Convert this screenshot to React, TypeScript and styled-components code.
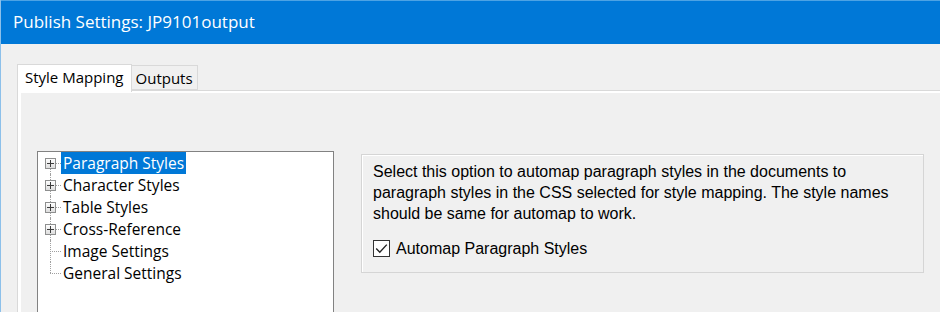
import React from 'react';
import styled, { createGlobalStyle } from 'styled-components';

const GlobalStyle = createGlobalStyle`
    html, body {
        margin: 0;
        padding: 0;
        background: #f0f0f0;
    }
`;

const treeItems = [
    { label: 'Paragraph Styles', expandable: true },
    { label: 'Character Styles', expandable: true },
    { label: 'Table Styles', expandable: true },
    { label: 'Cross-Reference', expandable: true },
    { label: 'Image Settings', expandable: false },
    { label: 'General Settings', expandable: false },
];

const ExpandBox = () => (
    <BoxSvg width="11" height="11" viewBox="0 0 11 11">
        <defs>
            <linearGradient id="boxFill" x1="0" y1="0" x2="0" y2="1">
                <stop offset="0" stopColor="#ffffff" />
                <stop offset="1" stopColor="#dcdcdc" />
            </linearGradient>
        </defs>
        <rect x="0.5" y="0.5" width="10" height="10" fill="url(#boxFill)" stroke="#8e8f8f" />
        <path d="M2 5.5 H9 M5.5 2 V9" stroke="#3c3c3c" strokeWidth="1" />
    </BoxSvg>
);

const CheckMark = () => (
    <svg width="17" height="17" viewBox="0 0 17 17">
        <rect x="0.5" y="0.5" width="16" height="16" fill="#ffffff" stroke="#333333" />
        <path d="M3.2 8.6 L6.8 12.2 L13.8 4.6" fill="none" stroke="#222222" strokeWidth="1.4" />
    </svg>
);

const App = () => {
    const selected = 0;
    return (
        <Window>
            <GlobalStyle />
            <TitleBar>Publish Settings: JP9101output</TitleBar>
            <Body>
                <TabStrip>
                    <Tab active>Style Mapping</Tab>
                    <Tab>Outputs</Tab>
                </TabStrip>
                <TabPanel>
                    <PanelContent>
                        <Tree>
                            {treeItems.map((item, index) => (
                                <TreeRow key={item.label}>
                                    <Gutter first={index === 0} last={index === treeItems.length - 1}>
                                        {item.expandable && <ExpandBox />}
                                    </Gutter>
                                    <TreeLabel selected={index === selected}>{item.label}</TreeLabel>
                                </TreeRow>
                            ))}
                        </Tree>
                        <GroupBox>
                            <Description>
                                Select this option to automap paragraph styles in the documents to
                                paragraph styles in the CSS selected for style mapping. The style names
                                should be same for automap to work.
                            </Description>
                            <CheckRow>
                                <CheckMark />
                                <CheckLabel>Automap Paragraph Styles</CheckLabel>
                            </CheckRow>
                        </GroupBox>
                    </PanelContent>
                </TabPanel>
            </Body>
        </Window>
    );
};

const Window = styled.div`
    width: 940px;
    height: 312px;
    overflow: hidden;
    box-sizing: border-box;
    border-left: 1px solid #8cc0ea;
    display: flex;
    flex-direction: column;
    background: #f0f0f0;
`;

const TitleBar = styled.div`
    height: 44px;
    flex-shrink: 0;
    box-sizing: border-box;
    border-top: 1px solid #4da3e4;
    background: #0078d7;
    color: #ffffff;
    font-family: 'Open Sans', sans-serif;
    font-size: 17px;
    line-height: 42px;
    padding-left: 12px;
`;

const Body = styled.div`
    flex: 1;
    display: flex;
    flex-direction: column;
    padding: 20px 0 0 16px;
    min-height: 0;
`;

const TabStrip = styled.div`
    display: flex;
    align-items: flex-end;
    height: 26px;
    position: relative;
    z-index: 1;
`;

const Tab = styled.div<{ active?: boolean }>`
    box-sizing: border-box;
    height: ${(p) => (p.active ? '28px' : '25px')};
    margin-bottom: ${(p) => (p.active ? '-2px' : '0')};
    padding: 0 ${(p) => (p.active ? '7px' : '4px')};
    border: 1px solid #d9d9d9;
    border-bottom: ${(p) => (p.active ? 'none' : '1px solid #d9d9d9')};
    border-left: ${(p) => (p.active ? '1px solid #d9d9d9' : 'none')};
    background: ${(p) => (p.active ? '#ffffff' : '#f0f0f0')};
    font-family: 'Open Sans', sans-serif;
    font-size: 15px;
    line-height: 24px;
    color: #000000;
`;

const TabPanel = styled.div`
    flex: 1;
    display: flex;
    border-top: 1px solid #d9d9d9;
    border-left: 1px solid #d9d9d9;
    background: #ffffff;
    padding: 2px 0 0 3px;
    min-height: 0;
`;

const PanelContent = styled.div`
    flex: 1;
    display: flex;
    align-items: flex-start;
    gap: 27px;
    background: #f0f0f0;
    padding: 58px 0 0 16px;
`;

const Tree = styled.div`
    width: 297px;
    height: 200px;
    flex-shrink: 0;
    box-sizing: border-box;
    border: 1px solid #828282;
    background: #ffffff;
    font-family: 'Open Sans', sans-serif;
    font-size: 15.5px;
    color: #000000;
`;

const TreeRow = styled.div`
    display: flex;
    align-items: center;
    height: 22px;
`;

const Gutter = styled.div<{ first?: boolean; last?: boolean }>`
    position: relative;
    width: 23px;
    height: 100%;
    flex-shrink: 0;

    &::before {
        content: '';
        position: absolute;
        left: 12px;
        top: ${(p) => (p.first ? '11px' : '0')};
        bottom: ${(p) => (p.last ? '11px' : '0')};
        border-left: 1px dotted #a0a0a0;
    }

    &::after {
        content: '';
        position: absolute;
        left: 12px;
        right: 0;
        top: 11px;
        border-top: 1px dotted #a0a0a0;
    }
`;

const BoxSvg = styled.svg`
    position: absolute;
    left: 7px;
    top: 6px;
    z-index: 1;
`;

const TreeLabel = styled.span<{ selected?: boolean }>`
    height: 22px;
    line-height: 22px;
    padding: 0 2px;
    background: ${(p) => (p.selected ? '#0078d7' : 'transparent')};
    color: ${(p) => (p.selected ? '#ffffff' : '#000000')};
    white-space: nowrap;
`;

const GroupBox = styled.div`
    width: 563px;
    height: 119px;
    margin-top: 3px;
    box-sizing: border-box;
    border: 1px solid #d5d5d5;
    box-shadow: inset 1px 1px 0 #ffffff;
    padding: 6px 12px 0 11px;
    font-family: 'Liberation Sans', Arial, sans-serif;
    font-size: 16px;
    color: #000000;
`;

const Description = styled.p`
    margin: 0;
    line-height: 21px;
`;

const CheckRow = styled.div`
    display: flex;
    align-items: center;
    gap: 6px;
    margin-top: 16px;
`;

const CheckLabel = styled.span`
    line-height: 17px;
`;

export default App;
